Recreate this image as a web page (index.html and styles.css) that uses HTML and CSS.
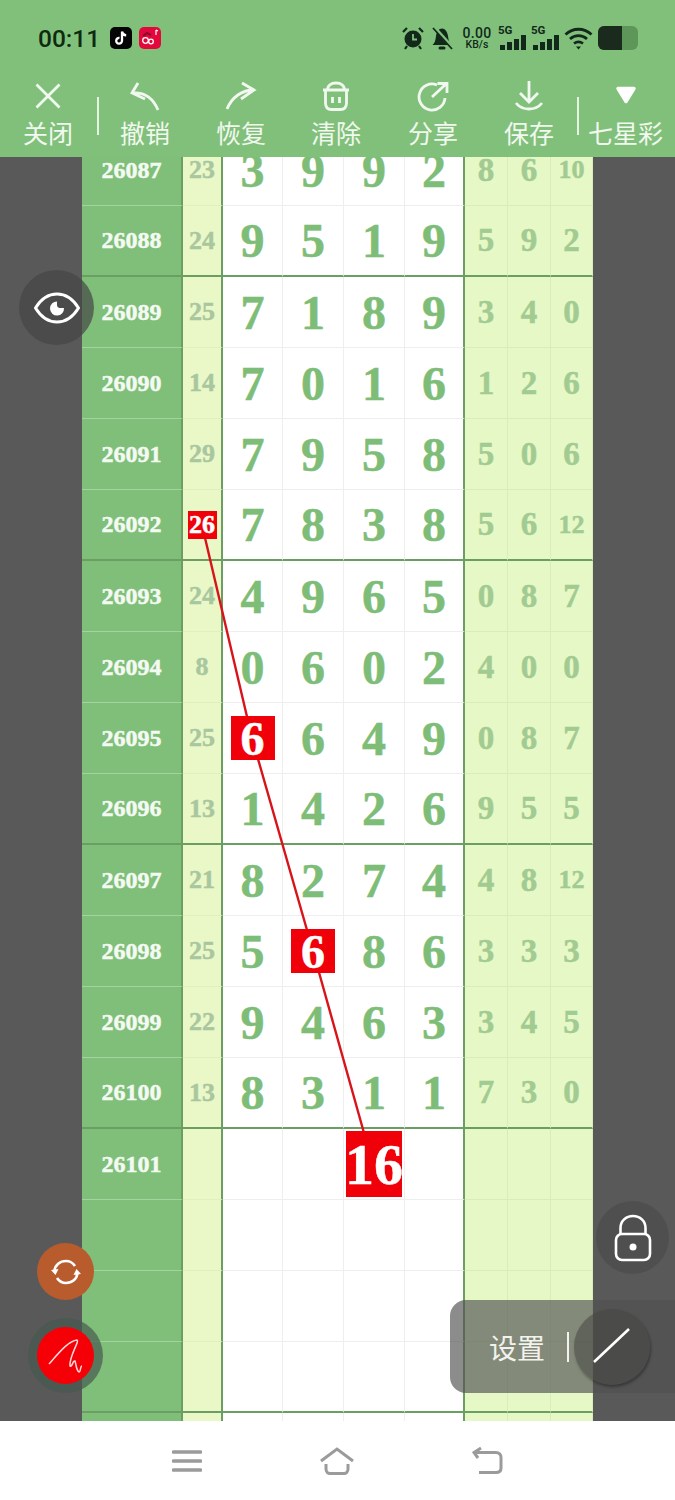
FILE: index.html

```html
<!DOCTYPE html>
<html lang="zh-CN">
<head>
  <meta charset="UTF-8" />
  <meta name="viewport" content="width=device-width, initial-scale=1.0" />
  <title>七星彩</title>
  <link rel="stylesheet" href="styles.css">
</head>
<body>
<div class="app">

  <header class="top">
    <!-- status bar -->
    <div class="status">
      <span class="clock">00:11</span>
      <svg class="app-icon" viewBox="0 0 22 22"><rect width="22" height="22" rx="5" fill="#050505"/><path d="M12 4.500v9.300a2.900 2.900 0 1 1-2.500-2.900M12 4.500c.4 2.400 1.900 3.700 4.200 3.900" fill="none" stroke="#fff" stroke-width="2.300"/></svg>
      <svg class="app-icon" viewBox="0 0 22 22"><rect width="22" height="22" rx="5" fill="#e3083c"/><circle cx="6.500" cy="13.500" r="2.800" fill="none" stroke="#fff" stroke-width="1.300"/><circle cx="12" cy="14.500" r="2.300" fill="none" stroke="#fff" stroke-width="1.300"/><path d="M4 9l4-3 4 2" fill="none" stroke="#8c0a2a" stroke-width="2"/><path d="M17 3v5M17 3l2 1" fill="none" stroke="#fff" stroke-width="1.200"/></svg>
      <div class="status-right">
        <svg class="st-alarm" viewBox="0 0 22 24"><circle cx="11" cy="13" r="8.500" fill="#12281a"/><path d="M11 8v5.500h4" fill="none" stroke="#81c07b" stroke-width="1.800"/><path d="M1 6l4-4M21 6l-4-4M5 20l-2 3M17 20l2 3" stroke="#12281a" stroke-width="2.200"/></svg>
        <svg class="st-bell" viewBox="0 0 22 24"><path d="M1.500 19c2.500-2 3-5 3.500-9C5.500 6 8 2.500 11 2.500S16.500 6 17 10c.5 4 1 7 3.500 9z" fill="#12281a"/><rect x="7.500" y="20.500" width="7" height="3" rx="1.500" fill="#12281a"/><path d="M3 1l19 21" stroke="#81c07b" stroke-width="3.400"/><path d="M2 2l19 21" stroke="#12281a" stroke-width="1.800"/></svg>
        <div class="speed"><b>0.00</b><small>KB/s</small></div>
        <div class="signal"><span class="five-g">5G</span><i class="b1"></i><i class="b2"></i><i class="b3"></i><i class="b4"></i></div>
        <div class="signal"><span class="five-g">5G</span><i class="b1"></i><i class="b2"></i><i class="b3"></i><i class="b4"></i></div>
        <svg class="st-wifi" viewBox="0 0 29 24"><path d="M1.500 8.500c7.500-7 18.500-7 26 0M6 13c5-4.500 12-4.500 17 0M10 17.500c2.700-2 6.300-2 9 0" fill="none" stroke="#12281a" stroke-width="2.800"/><path d="M12 20.500h5l-2.500 3z" fill="#12281a"/></svg>
        <div class="battery"><div class="battery-fill"></div></div>
      </div>
    </div>

    <!-- toolbar -->
    <nav class="toolbar">
      <div class="tool">
        <svg viewBox="0 0 32 32"><path d="M4.500 4.500l23 23M27.500 4.500l-23 23"/></svg>
        <span>关闭</span>
      </div>
      <div class="tool sep">
        <svg viewBox="0 0 32 32"><path d="M9 3L3 13l13 6M3 13c12-1 21 5 26 17"/></svg>
        <span>撤销</span>
      </div>
      <div class="tool">
        <svg viewBox="0 0 32 32"><path d="M17 3l12 7-13 9M29 10C17 10 7 17 2 29"/></svg>
        <span>恢复</span>
      </div>
      <div class="tool">
        <svg viewBox="0 0 32 32"><path d="M3 10h26M5.500 10v13c0 4.500 2 6.500 6 6.500h9c4 0 6-2 6-6.500V10M7.500 10c0-4.500 3.500-7 8.500-7s8.500 2.500 8.500 7M12.500 17v6M19.500 17v6"/></svg>
        <span>清除</span>
      </div>
      <div class="tool">
        <svg viewBox="0 0 32 32"><path d="M20 5A13 13 0 1 0 28 18M15 17L29 4M20.500 3.500h9.500v9.500"/></svg>
        <span>分享</span>
      </div>
      <div class="tool">
        <svg viewBox="0 0 32 32"><path d="M16 1v20M7 13l9 9 9-9M3 23c4 5 8 6 13 6s9-1 13-6"/></svg>
        <span>保存</span>
      </div>
      <div class="tool sep">
        <svg viewBox="0 0 32 32"><path class="solid" d="M8 8.500h16l-8 13z"/></svg>
        <span>七星彩</span>
      </div>
    </nav>
  </header>

  <main class="board">
    <div class="table">
      <div class="row"><span class="id">26087</span><span class="sum">23</span><span class="m">3</span><span class="m">9</span><span class="m">9</span><span class="m last">2</span><span class="s">8</span><span class="s">6</span><span class="s sm">10</span></div>
      <div class="row end"><span class="id">26088</span><span class="sum">24</span><span class="m">9</span><span class="m">5</span><span class="m">1</span><span class="m last">9</span><span class="s">5</span><span class="s">9</span><span class="s">2</span></div>
      <div class="row"><span class="id">26089</span><span class="sum">25</span><span class="m">7</span><span class="m">1</span><span class="m">8</span><span class="m last">9</span><span class="s">3</span><span class="s">4</span><span class="s">0</span></div>
      <div class="row"><span class="id">26090</span><span class="sum">14</span><span class="m">7</span><span class="m">0</span><span class="m">1</span><span class="m last">6</span><span class="s">1</span><span class="s">2</span><span class="s">6</span></div>
      <div class="row"><span class="id">26091</span><span class="sum">29</span><span class="m">7</span><span class="m">9</span><span class="m">5</span><span class="m last">8</span><span class="s">5</span><span class="s">0</span><span class="s">6</span></div>
      <div class="row end"><span class="id">26092</span><span class="sum"><b class="hit hit-sum">26</b></span><span class="m">7</span><span class="m">8</span><span class="m">3</span><span class="m last">8</span><span class="s">5</span><span class="s">6</span><span class="s sm">12</span></div>
      <div class="row"><span class="id">26093</span><span class="sum">24</span><span class="m">4</span><span class="m">9</span><span class="m">6</span><span class="m last">5</span><span class="s">0</span><span class="s">8</span><span class="s">7</span></div>
      <div class="row"><span class="id">26094</span><span class="sum">8</span><span class="m">0</span><span class="m">6</span><span class="m">0</span><span class="m last">2</span><span class="s">4</span><span class="s">0</span><span class="s">0</span></div>
      <div class="row"><span class="id">26095</span><span class="sum">25</span><span class="m"><b class="hit">6</b></span><span class="m">6</span><span class="m">4</span><span class="m last">9</span><span class="s">0</span><span class="s">8</span><span class="s">7</span></div>
      <div class="row end"><span class="id">26096</span><span class="sum">13</span><span class="m">1</span><span class="m">4</span><span class="m">2</span><span class="m last">6</span><span class="s">9</span><span class="s">5</span><span class="s">5</span></div>
      <div class="row"><span class="id">26097</span><span class="sum">21</span><span class="m">8</span><span class="m">2</span><span class="m">7</span><span class="m last">4</span><span class="s">4</span><span class="s">8</span><span class="s sm">12</span></div>
      <div class="row"><span class="id">26098</span><span class="sum">25</span><span class="m">5</span><span class="m"><b class="hit">6</b></span><span class="m">8</span><span class="m last">6</span><span class="s">3</span><span class="s">3</span><span class="s">3</span></div>
      <div class="row"><span class="id">26099</span><span class="sum">22</span><span class="m">9</span><span class="m">4</span><span class="m">6</span><span class="m last">3</span><span class="s">3</span><span class="s">4</span><span class="s">5</span></div>
      <div class="row end"><span class="id">26100</span><span class="sum">13</span><span class="m">8</span><span class="m">3</span><span class="m">1</span><span class="m last">1</span><span class="s">7</span><span class="s">3</span><span class="s">0</span></div>
      <div class="row"><span class="id">26101</span><span class="sum"></span><span class="m"></span><span class="m"></span><span class="m"><b class="hit hit-big">16</b></span><span class="m last"></span><span class="s"></span><span class="s"></span><span class="s"></span></div>
      <div class="row"><span class="id"></span><span class="sum"></span><span class="m"></span><span class="m"></span><span class="m"></span><span class="m last"></span><span class="s"></span><span class="s"></span><span class="s"></span></div>
      <div class="row"><span class="id"></span><span class="sum"></span><span class="m"></span><span class="m"></span><span class="m"></span><span class="m last"></span><span class="s"></span><span class="s"></span><span class="s"></span></div>
      <div class="row end"><span class="id"></span><span class="sum"></span><span class="m"></span><span class="m"></span><span class="m"></span><span class="m last"></span><span class="s"></span><span class="s"></span><span class="s"></span></div>
      <div class="row"><span class="id"></span><span class="sum"></span><span class="m"></span><span class="m"></span><span class="m"></span><span class="m last"></span><span class="s"></span><span class="s"></span><span class="s"></span></div>
    </div>
  </main>

  <!-- trend line over the grid -->
  <svg class="trend" viewBox="0 0 675 1500"><polyline points="202,525 252,738 313,951 373,1165" fill="none" stroke="#d8141a" stroke-width="2.400"/></svg>

  <!-- floating buttons -->
  <div class="float eye">
    <svg viewBox="0 0 46 32" width="46" height="32"><path d="M1.500 16C7 7 14 2 23 2s16 5 21.500 14C39 25 32 30 23 30S7 25 1.500 16z" fill="none" stroke="#fff" stroke-width="3"/><path d="M23 9.500a7 7 0 1 0 7 6.500h-4.500a3 3 0 0 1-2.500-2.500z" fill="#fff"/></svg>
  </div>
  <div class="float sync">
    <svg viewBox="0 0 32 32" width="32" height="32"><path d="M4.500 15C5 9 10 5 16 5c4 0 7 2 9 5M27.500 17c-.5 6-5.500 10-11.500 10-4 0-7-2-9-5" fill="none" stroke="#fff" stroke-width="2.600"/><path d="M1 14l7.500-1-3 6zM31 18l-7.500 1 3-6z" fill="#fff"/></svg>
  </div>
  <div class="float pen">
    <div class="pen-dot">
      <svg viewBox="0 0 56 56" width="56" height="56"><path d="M11 36C20 26 30 13 39 12c3 1-8 16-7 26 2 2 3-6 5-5 1 2 1 9 4 11 2 0 1-6 3-6" fill="none" stroke="#ffd9d9" stroke-width="1.500"/></svg>
    </div>
  </div>
  <div class="float lock">
    <svg viewBox="0 0 38 48" width="38" height="48"><path d="M6.500 21V14C6.500 7 12 2 19 2s12.500 5 12.500 12v7" fill="none" stroke="#fff" stroke-width="2.600"/><rect x="2" y="20" width="34" height="26" rx="6" fill="none" stroke="#fff" stroke-width="2.600"/><circle cx="19" cy="33" r="3.500" fill="#fff"/></svg>
  </div>
  <div class="settings">
    <span class="settings-label">设置</span>
    <i class="settings-bar"></i>
    <div class="pen-tool">
      <svg viewBox="0 0 76 76" width="76" height="76"><path d="M20 53l35-33" stroke="#fff" stroke-width="2.600"/></svg>
    </div>
  </div>

  <footer class="navbar">
    <svg viewBox="0 0 30 24" width="30" height="24"><path d="M1.500 3h27M1.500 12h27M1.500 21h27" stroke="#9b9b9b" stroke-width="3.600" stroke-linecap="round"/></svg>
    <svg viewBox="0 0 36 28" width="36" height="28"><path d="M2 14L18 2l16 12M7 17v5c0 3 2 4.500 4 4.500h14c2 0 4-1.500 4-4.500v-5" fill="none" stroke="#9b9b9b" stroke-width="3"/></svg>
    <svg viewBox="0 0 32 28" width="32" height="28"><path d="M2 5.500h22c3 0 5 2 5 5V21c0 3-2 4.500-5 4.500H7M9 1L2 5.500 6 11" fill="none" stroke="#9b9b9b" stroke-width="3"/></svg>
  </footer>

</div>
</body>
</html>
```

FILE: styles.css

```css
* {
  margin: 0;
  padding: 0;
  box-sizing: border-box;
}

html, body {
  background: #595959;
}

.app {
  position: relative;
  width: 675px;
  height: 1500px;
  overflow: hidden;
  display: flex;
  flex-direction: column;
  font-family: "Liberation Serif", serif;
}

/* header */
.top {
  position: relative;
  z-index: 3;
  height: 157px;
  background: #81c07b;
  font-family: "Noto Sans CJK SC", "Noto Sans", sans-serif;
}

.status {
  display: flex;
  align-items: center;
  height: 76px;
  padding: 0 37px 0 38px;
}

.clock {
  font-family: Roboto, sans-serif;
  font-size: 24.500px;
  font-weight: 500;
  color: #0e2a10;
  margin-right: 10px;
}

.app-icon {
  width: 22px;
  height: 22px;
  margin-right: 7px;
}

.status-right {
  margin-left: auto;
  display: flex;
  align-items: center;
  color: #12281a;
}

.st-alarm {
  width: 22px;
  height: 24px;
  margin-right: 7px;
}

.st-bell {
  width: 22px;
  height: 24px;
  margin-right: 8px;
}

.speed {
  width: 32px;
  margin-right: 5px;
  font-family: Roboto, sans-serif;
  text-align: center;
  line-height: 1;
}

.speed b {
  display: block;
  font-size: 14px;
  font-weight: 500;
  letter-spacing: 0.3px;
}

.speed small {
  display: block;
  font-size: 10.500px;
  font-weight: 500;
}

.signal {
  position: relative;
  display: flex;
  align-items: flex-end;
  justify-content: flex-end;
  gap: 2px;
  width: 28px;
  height: 24px;
  margin-right: 5px;
}

.signal i {
  display: block;
  width: 5px;
  background: #12281a;
}

.signal .b1 { height: 5px; }
.signal .b2 { height: 8px; }
.signal .b3 { height: 11px; }
.signal .b4 { height: 15px; }

.five-g {
  position: absolute;
  top: -1px;
  left: 0;
  font-family: Roboto, sans-serif;
  font-size: 11.500px;
  font-weight: 700;
  line-height: 10px;
}

.st-wifi {
  width: 29px;
  height: 24px;
  margin-right: 5px;
}

.battery {
  width: 40px;
  height: 24px;
  border-radius: 6px;
  background: #5e9659;
  overflow: hidden;
}

.battery-fill {
  width: 24px;
  height: 100%;
  background: #1a2a1c;
}

.toolbar {
  display: grid;
  grid-template-columns: 96px 98px 94px 96px 98px 94px 99px;
}

.tool {
  position: relative;
  display: flex;
  flex-direction: column;
  align-items: center;
  color: #f1f8ef;
  font-size: 25px;
  line-height: 36px;
}

.tool svg {
  width: 32px;
  height: 32px;
  margin-top: 4px;
  margin-bottom: 2px;
  fill: none;
  stroke: #f1f8ef;
  stroke-width: 2.800;
}

.tool svg .solid {
  fill: #fff;
  stroke: #fff;
  stroke-width: 3.400;
  stroke-linejoin: round;
}

.tool.sep::before {
  content: "";
  position: absolute;
  left: 1px;
  top: 21px;
  width: 2px;
  height: 38px;
  background: #e6f3e3;
}

/* number grid */
.board {
  height: 1264px;
  padding: 0 82px;
  overflow: hidden;
}

.table {
  margin-top: -22px;
}

.row {
  display: grid;
  grid-template-columns: 101px 40px 60px 61px 61px 60px 43px 43px 42px;
  height: 71px;
}

.row span {
  display: flex;
  align-items: center;
  justify-content: center;
  font-weight: 700;
  border-bottom: 1px solid #eeeeee;
  border-right: 1px solid #eeeeee;
  -webkit-text-stroke: 0.5px currentColor;
}

.id {
  background: #7fbf79;
  color: #f4faf2;
  font-size: 24px;
  border-bottom-color: #a5d3a0 !important;
  border-right: 2px solid #6a9e62 !important;
}

.sum {
  background: #eaf8c8;
  color: #a9c79f;
  font-size: 26px;
  border-bottom-color: #e0efbe !important;
  border-right: 2px solid #6a9e62 !important;
}

.m {
  background: #fff;
  color: #7dbd77;
  font-size: 48px;
}

.m.last {
  border-right: 2px solid #6a9e62;
}

.s {
  background: #e6f8c6;
  color: #a2cb92;
  font-size: 33px;
  border-bottom-color: #d9edb8 !important;
  border-right-color: #d9edb8 !important;
}

.s.sm {
  font-size: 26px;
}

.row.end span {
  border-bottom: 2px solid #6a9e62 !important;
}

.hit {
  position: relative;
  z-index: 2;
  display: flex;
  align-items: center;
  justify-content: center;
  width: 44px;
  height: 44px;
  background: #f00008;
  color: #fff;
  -webkit-text-stroke: 0.5px #fff;
}

.hit-sum {
  width: 29px;
  height: 28px;
}

.hit-big {
  width: 56px;
  height: 66px;
  font-size: 58px;
}

.trend {
  position: absolute;
  left: 0;
  top: 0;
  width: 675px;
  height: 1500px;
  z-index: 1;
  pointer-events: none;
}

/* floating controls */
.float {
  position: absolute;
  z-index: 4;
  display: flex;
  align-items: center;
  justify-content: center;
  border-radius: 50%;
}

.eye {
  left: 19px;
  top: 270px;
  width: 75px;
  height: 75px;
  background: rgba(70, 70, 70, 0.7);
}

.sync {
  left: 37px;
  top: 1243px;
  width: 57px;
  height: 57px;
  background: #b85c2e;
}

.pen {
  left: 28px;
  top: 1318px;
  width: 75px;
  height: 75px;
  background: rgba(70, 90, 80, 0.7);
}

.pen-dot {
  width: 57px;
  height: 57px;
  border-radius: 50%;
  background: #f60008;
  display: flex;
  align-items: center;
  justify-content: center;
}

.lock {
  left: 596px;
  top: 1201px;
  width: 73px;
  height: 73px;
  background: rgba(75, 75, 75, 0.7);
}

.settings {
  position: absolute;
  z-index: 4;
  left: 450px;
  top: 1300px;
  width: 225px;
  height: 93px;
  display: flex;
  align-items: center;
  padding-left: 39px;
  border-radius: 16px 0 0 16px;
  background: rgba(80, 80, 80, 0.66);
  color: #f2f2ee;
}

.settings-label {
  font-family: "Noto Sans CJK SC", "Noto Sans", sans-serif;
  font-size: 28px;
}

.settings-bar {
  display: block;
  width: 2px;
  height: 30px;
  margin-left: 22px;
  background: #f2f2ee;
}

.pen-tool {
  width: 76px;
  height: 76px;
  margin-left: 5px;
  border-radius: 50%;
  background: rgba(70, 70, 66, 0.55);
  box-shadow: 1px 2px 3px rgba(0, 0, 0, 0.35);
}

/* bottom nav */
.navbar {
  position: relative;
  z-index: 3;
  height: 79px;
  background: #fff;
  display: flex;
  align-items: center;
  justify-content: center;
  gap: 117px;
}
```
